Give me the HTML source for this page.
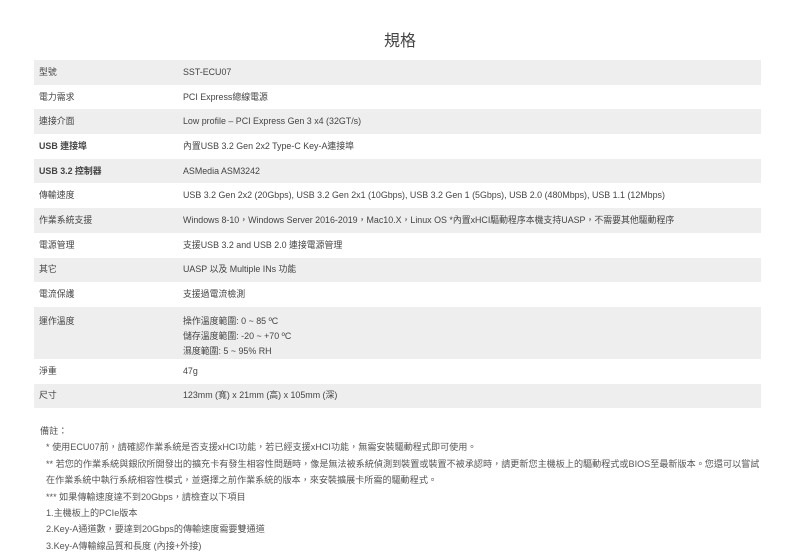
<!DOCTYPE html>
<html><head><meta charset="utf-8"><style>
body{margin:0;width:800px;height:552px;background:#fff;font-family:"Liberation Sans","Noto Sans CJK TC",sans-serif;color:#444;overflow:hidden;position:relative}
h1{position:absolute;top:31px;left:0;width:800px;text-align:center;margin:0;font-size:16px;font-weight:normal;color:#444;line-height:22px}
table{position:absolute;top:60px;left:34px;width:727px;border-collapse:collapse;font-size:8.9px}
td{padding:0;height:24.7px;vertical-align:middle;line-height:15px}
td.l{padding-left:5px;width:144px}
tr:nth-child(odd){background:#eee}
b{font-weight:bold}
.notes{position:absolute;top:423px;left:40px;font-size:9.1px;line-height:16.4px;color:#555}
.notes div{padding-left:6px}
</style></head><body>
<h1>規格</h1>
<table>
<tr><td class="l">型號</td><td>SST-ECU07</td></tr>
<tr><td class="l">電力需求</td><td>PCI Express總線電源</td></tr>
<tr><td class="l">連接介面</td><td>Low profile – PCI Express Gen 3 x4 (32GT/s)</td></tr>
<tr><td class="l"><b>USB 連接埠</b></td><td>內置USB 3.2 Gen 2x2 Type-C Key-A連接埠</td></tr>
<tr><td class="l"><b>USB 3.2 控制器</b></td><td>ASMedia ASM3242</td></tr>
<tr><td class="l">傳輸速度</td><td>USB 3.2 Gen 2x2 (20Gbps), USB 3.2 Gen 2x1 (10Gbps), USB 3.2 Gen 1 (5Gbps), USB 2.0 (480Mbps), USB 1.1 (12Mbps)</td></tr>
<tr><td class="l">作業系統支援</td><td>Windows 8-10，Windows Server 2016-2019，Mac10.X，Linux OS *內置xHCI驅動程序本機支持UASP，不需要其他驅動程序</td></tr>
<tr><td class="l">電源管理</td><td>支援USB 3.2 and USB 2.0 連接電源管理</td></tr>
<tr><td class="l">其它</td><td>UASP 以及 Multiple INs 功能</td></tr>
<tr><td class="l">電流保護</td><td>支援過電流檢測</td></tr>
<tr><td class="l" style="vertical-align:top;padding-top:7px;height:45px">運作溫度</td><td style="vertical-align:top;padding-top:7px">操作溫度範圍: 0 ~ 85 ºC<br>儲存溫度範圍: -20 ~ +70 ºC<br>濕度範圍: 5 ~ 95% RH</td></tr>
<tr><td class="l">淨重</td><td>47g</td></tr>
<tr><td class="l">尺寸</td><td>123mm (寬) x 21mm (高) x 105mm (深)</td></tr>
</table>
<div class="notes">備註：
<div>* 使用ECU07前，請確認作業系統是否支援xHCI功能，若已經支援xHCI功能，無需安裝驅動程式即可使用。</div>
<div>** 若您的作業系統與銀欣所開發出的擴充卡有發生相容性問題時，像是無法被系統偵測到裝置或裝置不被承認時，請更新您主機板上的驅動程式或BIOS至最新版本。您還可以嘗試</div>
<div>在作業系統中執行系統相容性模式，並選擇之前作業系統的版本，來安裝擴展卡所需的驅動程式。</div>
<div>*** 如果傳輸速度達不到20Gbps，請檢查以下項目</div>
<div>1.主機板上的PCIe版本</div>
<div>2.Key-A通道數，要達到20Gbps的傳輸速度需要雙通道</div>
<div>3.Key-A傳輸線品質和長度 (內接+外接)</div>
</div>
</body></html>
